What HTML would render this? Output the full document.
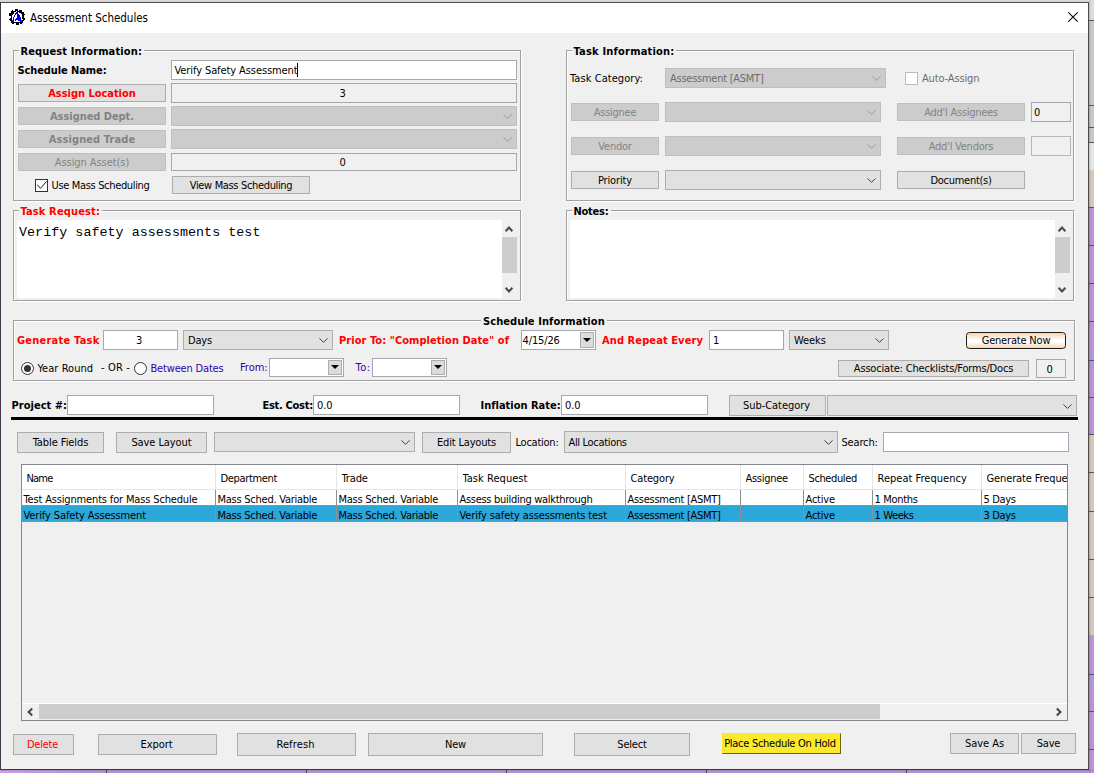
<!DOCTYPE html>
<html lang="en"><head><meta charset="utf-8"><title>Assessment Schedules</title>
<style>
*{box-sizing:border-box;margin:0;padding:0}
html,body{width:1094px;height:773px;overflow:hidden;background:#b993d6}
body{position:relative;font-family:"DejaVu Sans Condensed","DejaVu Sans","Liberation Sans",sans-serif;font-stretch:condensed;font-size:11px;color:#000;letter-spacing:-0.12px}
.a{position:absolute;white-space:nowrap}
.t{position:absolute;white-space:nowrap;line-height:14px;height:14px}
.b{font-weight:bold;letter-spacing:0.05px}
.r{color:#f00}
.btn{position:absolute;background:#e1e1e1;border:1px solid #adadad;text-align:center;white-space:nowrap;overflow:hidden}
.btn.d{background:#ccc;border-color:#bfbfbf;color:#838383}
.in{position:absolute;background:#fff;border:1px solid #a5a8b0;white-space:nowrap;overflow:hidden;padding-top:1px}
.ro{background:#f0f0f0;text-align:center}
.cb{position:absolute;background:#e1e1e1;border:1px solid #adadad;white-space:nowrap;overflow:hidden;padding-top:1px}
.cb.d{background:#ccc;border-color:#bfbfbf;color:#6d6d6d}
.grp{position:absolute;border:1px solid #a0a0a0;box-shadow:inset 1px 1px 0 #fff,1px 1px 0 #fff}
.gl{position:absolute;background:#f0f0f0;font-weight:bold;white-space:nowrap;line-height:14px;height:14px;padding:0 2px}
svg{position:absolute;overflow:visible}
</style></head>
<body>
<div class="a" style="left:0;top:0;width:1094px;height:773px;background:linear-gradient(90deg,#c8a1e1 0,#b494d0 8%,#b494d0 100%)"></div>
<div class="a" style="left:0;top:0;width:1094px;height:3px;background:linear-gradient(#dadada,#cfcfcf)"></div>
<div class="a" style="left:1088px;top:0px;width:6px;height:20px;background:#dcdcdc"></div>
<div class="a" style="left:1088px;top:20px;width:6px;height:122px;background:#c8c8c8"></div>
<div class="a" style="left:1088px;top:142px;width:6px;height:28px;background:#e6e6e6"></div>
<div class="a" style="left:1088px;top:170px;width:6px;height:37px;background:#dac7b7"></div>
<div class="a" style="left:1088px;top:207px;width:6px;height:227px;background:#ba94d8"></div>
<div class="a" style="left:1088px;top:434px;width:6px;height:201px;background:#d8c6b6"></div>
<div class="a" style="left:1088px;top:635px;width:6px;height:138px;background:#ba94d8"></div>
<div class="a" style="left:1088px;top:20px;width:6px;height:1px;background:#5b5560"></div>
<div class="a" style="left:1088px;top:105px;width:6px;height:1px;background:#5b5560"></div>
<div class="a" style="left:1088px;top:127px;width:6px;height:1px;background:#5b5560"></div>
<div class="a" style="left:1088px;top:142px;width:6px;height:1px;background:#5b5560"></div>
<div class="a" style="left:1088px;top:207px;width:6px;height:1px;background:#5b5560"></div>
<div class="a" style="left:1088px;top:245px;width:6px;height:1px;background:#5b5560"></div>
<div class="a" style="left:1088px;top:283px;width:6px;height:1px;background:#5b5560"></div>
<div class="a" style="left:1088px;top:321px;width:6px;height:1px;background:#5b5560"></div>
<div class="a" style="left:1088px;top:360px;width:6px;height:1px;background:#5b5560"></div>
<div class="a" style="left:1088px;top:397px;width:6px;height:1px;background:#5b5560"></div>
<div class="a" style="left:1088px;top:434px;width:6px;height:1px;background:#5b5560"></div>
<div class="a" style="left:1088px;top:472px;width:6px;height:1px;background:#5b5560"></div>
<div class="a" style="left:1088px;top:511px;width:6px;height:1px;background:#5b5560"></div>
<div class="a" style="left:1088px;top:559px;width:6px;height:1px;background:#5b5560"></div>
<div class="a" style="left:1088px;top:597px;width:6px;height:1px;background:#5b5560"></div>
<div class="a" style="left:1088px;top:674px;width:6px;height:1px;background:#5b5560"></div>
<div class="a" style="left:1088px;top:711px;width:6px;height:1px;background:#5b5560"></div>
<div class="a" style="left:1088px;top:749px;width:6px;height:1px;background:#5b5560"></div>
<div class="a" style="left:1089px;top:0;width:2px;height:773px;background:linear-gradient(90deg,rgba(0,0,0,.18),rgba(0,0,0,0))"></div>
<div class="a" style="left:0;top:770px;width:1094px;height:1px;background:rgba(0,0,0,.1)"></div>
<div class="a" style="left:106px;top:770px;width:1px;height:3px;background:#4a4350"></div>
<div class="a" style="left:306px;top:770px;width:1px;height:3px;background:#4a4350"></div>
<div class="a" style="left:506px;top:770px;width:1px;height:3px;background:#4a4350"></div>
<div class="a" style="left:706px;top:770px;width:1px;height:3px;background:#4a4350"></div>
<div class="a" style="left:906px;top:770px;width:1px;height:3px;background:#4a4350"></div>
<div class="a" style="left:0;top:2px;width:1089px;height:768px;background:#f0f0f0;border:1px solid #4d4d4d;border-left-color:#3f3648;border-bottom-color:#3f3648"></div>
<div class="a" style="left:1px;top:3px;width:1087px;height:30px;background:#fff"></div>
<svg style="left:9px;top:9px" width="16" height="16" viewBox="0 0 16 16" shape-rendering="crispEdges"><path d="M6 0h3v1h-3zM3 1h1v1h-1zM6 1h3v1h-3zM10 1h3v1h-3zM2 2h5v1h-5zM8 2h5v1h-5zM2 3h3v1h-3zM10 3h5v1h-5zM0 4h5v1h-5zM12 4h3v1h-3zM0 5h4v1h-4zM13 5h3v1h-3zM0 6h3v1h-3zM13 6h2v1h-2zM2 7h1v1h-1zM13 7h2v1h-2zM2 8h1v1h-1zM13 8h2v1h-2zM1 9h2v1h-2zM13 9h3v1h-3zM0 10h3v1h-3zM14 10h2v1h-2zM1 11h2v1h-2zM13 11h2v1h-2zM2 12h1v1h-1zM13 12h1v1h-1zM3 13h10v1h-10zM3 14h2v1h-2zM7 14h3v1h-3zM11 14h2v1h-2zM7 15h3v1h-3z" fill="#000"/><path d="M7 3h2v1h-2zM6 4h3v1h-3zM6 5h1v1h-1zM8 5h2v1h-2zM5 6h1v1h-1zM8 6h3v1h-3zM5 7h1v1h-1zM8 7h3v1h-3zM4 8h1v1h-1zM8 8h4v1h-4zM4 9h1v1h-1zM7 9h5v1h-5zM4 10h1v1h-1zM6 10h6v1h-6zM3 11h2v1h-2zM6 11h1v1h-1zM9 11h4v1h-4zM3 12h2v1h-2zM11 12h2v1h-2zM2 13h1v1h-1zM13 13h1v1h-1z" fill="#0000ff"/></svg>
<div class="a" style="left:30px;top:11px;font-size:11.5px;line-height:15px;letter-spacing:-0.015px;">Assessment Schedules</div>
<svg style="left:1068px;top:12px" width="10" height="10" viewBox="0 0 10 10"><path d="M0.3 0.3 L9.7 9.7 M9.7 0.3 L0.3 9.7" stroke="#000" stroke-width="1.05" fill="none"/></svg>
<div class="grp" style="left:13px;top:50px;width:508px;height:151px"></div>
<div class="gl " style="left:18.5px;top:45px;letter-spacing:0.131px;">Request Information:</div>
<div class="t b" style="left:17.5px;top:64px;letter-spacing:-0.098px;">Schedule Name:</div>
<div class="in " style="left:171px;top:60px;width:346px;height:20px;line-height:18px;letter-spacing:-0.094px;padding-left:2.5px">Verify Safety Assessment</div>
<div class="a" style="left:297px;top:63px;width:1px;height:14px;background:#000"></div>
<div class="btn b r" style="left:18px;top:84px;width:148px;height:18px;line-height:16px;padding-top:1px;letter-spacing:-0.035px;">Assign Location</div>
<div class="in ro" style="left:171px;top:83px;width:346px;height:20px;line-height:18px;padding-right:3px">3</div>
<div class="btn b d" style="left:18px;top:107px;width:148px;height:18px;line-height:16px;padding-top:1px;letter-spacing:-0.051px;">Assigned Dept.</div>
<div class="cb d" style="left:171px;top:106px;width:346px;height:20px;line-height:18px;padding-left:4px;"></div>
<svg style="left:503.0px;top:114.0px" width="9" height="5" viewBox="0 0 9 5"><path d="M0.5 0.4 L4.5 4.4 L8.5 0.4" fill="none" stroke="#9a9a9a" stroke-width="1"/></svg>
<div class="btn b d" style="left:18px;top:130px;width:148px;height:18px;line-height:16px;padding-top:1px;letter-spacing:0.099px;">Assigned Trade</div>
<div class="cb d" style="left:171px;top:129px;width:346px;height:20px;line-height:18px;padding-left:4px;"></div>
<svg style="left:503.0px;top:137.0px" width="9" height="5" viewBox="0 0 9 5"><path d="M0.5 0.4 L4.5 4.4 L8.5 0.4" fill="none" stroke="#9a9a9a" stroke-width="1"/></svg>
<div class="btn d" style="left:18px;top:153px;width:148px;height:18px;line-height:16px;padding-top:1px;letter-spacing:-0.071px;">Assign Asset(s)</div>
<div class="in ro" style="left:171px;top:153px;width:346px;height:18px;line-height:16px;padding-right:3px">0</div>
<div class="a" style="left:35px;top:179px;width:13px;height:13px;background:#fff;border:1px solid #333"></div>
<svg style="left:35px;top:179px" width="13" height="13" viewBox="0 0 13 13"><path d="M2.3 5.6 L5.5 9.4 L11.6 2.3" fill="none" stroke="#222" stroke-width="1"/></svg>
<div class="t " style="left:51.5px;top:179px;letter-spacing:-0.337px;">Use Mass Scheduling</div>
<div class="btn " style="left:172px;top:176px;width:138px;height:18px;line-height:16px;padding-top:1px;letter-spacing:-0.344px;">View Mass Scheduling</div>
<div class="grp" style="left:566px;top:50px;width:508px;height:151px"></div>
<div class="gl " style="left:571.5px;top:45px;letter-spacing:0.202px;">Task Information:</div>
<div class="t " style="left:570px;top:72px;letter-spacing:0.067px;">Task Category:</div>
<div class="cb d" style="left:665px;top:68px;width:221px;height:20px;line-height:18px;padding-left:4px;letter-spacing:-0.257px;">Assessment [ASMT]</div>
<svg style="left:872.0px;top:76.0px" width="9" height="5" viewBox="0 0 9 5"><path d="M0.5 0.4 L4.5 4.4 L8.5 0.4" fill="none" stroke="#9a9a9a" stroke-width="1"/></svg>
<div class="a" style="left:905px;top:72px;width:13px;height:13px;background:#fff;border:1px solid #bcbcbc"></div>
<div class="t " style="left:922px;top:72px;letter-spacing:-0.146px;color:#6d6d6d">Auto-Assign</div>
<div class="btn d" style="left:571px;top:103px;width:88px;height:18px;line-height:16px;padding-top:1px;letter-spacing:-0.260px;">Assignee</div>
<div class="cb d" style="left:665px;top:102px;width:216px;height:20px;line-height:18px;padding-left:4px;"></div>
<svg style="left:867.0px;top:110.0px" width="9" height="5" viewBox="0 0 9 5"><path d="M0.5 0.4 L4.5 4.4 L8.5 0.4" fill="none" stroke="#9a9a9a" stroke-width="1"/></svg>
<div class="btn d" style="left:897px;top:103px;width:128px;height:18px;line-height:16px;padding-top:1px;letter-spacing:-0.272px;">Add'l Assignees</div>
<div class="in " style="left:1031px;top:102px;width:40px;height:20px;line-height:18px;padding-left:2px;background:#f0f0f0">0</div>
<div class="btn d" style="left:571px;top:137px;width:88px;height:18px;line-height:16px;padding-top:1px;letter-spacing:-0.231px;">Vendor</div>
<div class="cb d" style="left:665px;top:136px;width:216px;height:20px;line-height:18px;padding-left:4px;"></div>
<svg style="left:867.0px;top:144.0px" width="9" height="5" viewBox="0 0 9 5"><path d="M0.5 0.4 L4.5 4.4 L8.5 0.4" fill="none" stroke="#9a9a9a" stroke-width="1"/></svg>
<div class="btn d" style="left:897px;top:137px;width:128px;height:18px;line-height:16px;padding-top:1px;letter-spacing:-0.230px;">Add'l Vendors</div>
<div class="in " style="left:1031px;top:136px;width:40px;height:20px;line-height:18px;background:#f0f0f0;border-color:#b4b6bc"></div>
<div class="btn " style="left:571px;top:171px;width:88px;height:18px;line-height:16px;padding-top:1px;letter-spacing:-0.125px;">Priority</div>
<div class="cb " style="left:665px;top:170px;width:216px;height:20px;line-height:18px;padding-left:4px;"></div>
<svg style="left:867.0px;top:178.0px" width="9" height="5" viewBox="0 0 9 5"><path d="M0.5 0.4 L4.5 4.4 L8.5 0.4" fill="none" stroke="#404040" stroke-width="1"/></svg>
<div class="btn " style="left:897px;top:171px;width:128px;height:18px;line-height:16px;padding-top:1px;letter-spacing:-0.287px;">Document(s)</div>
<div class="grp" style="left:13px;top:210px;width:508px;height:91px"></div>
<div class="gl r" style="left:18.5px;top:205px;letter-spacing:0.139px;">Task Request:</div>
<div class="a" style="left:17px;top:220px;width:485px;height:78px;background:#fff"></div>
<div class="a" style="left:19px;top:225px;font-family:'Liberation Mono',monospace;font-size:13.33px;line-height:16px;letter-spacing:0.05px;font-stretch:normal">Verify safety assessments test</div>
<div class="a" style="left:502px;top:220px;width:15px;height:78px;background:#f0f0f0"></div>
<div class="a" style="left:502px;top:237px;width:15px;height:36px;background:#cdcdcd"></div>
<svg style="left:505.0px;top:226px" width="8" height="6" viewBox="0 0 8 6"><path d="M0.6 5.2 L4 1.6 L7.4 5.2" fill="none" stroke="#4a4a4a" stroke-width="2.1"/></svg>
<svg style="left:505.0px;top:287px" width="8" height="6" viewBox="0 0 8 6"><path d="M0.6 0.8 L4 4.4 L7.4 0.8" fill="none" stroke="#4a4a4a" stroke-width="2.1"/></svg>
<div class="grp" style="left:566px;top:210px;width:508px;height:91px"></div>
<div class="gl " style="left:571.5px;top:205px;letter-spacing:-0.232px;">Notes:</div>
<div class="a" style="left:570px;top:220px;width:485px;height:78px;background:#fff"></div>
<div class="a" style="left:1055px;top:220px;width:15px;height:78px;background:#f0f0f0"></div>
<div class="a" style="left:1055px;top:237px;width:15px;height:36px;background:#cdcdcd"></div>
<svg style="left:1058.0px;top:226px" width="8" height="6" viewBox="0 0 8 6"><path d="M0.6 5.2 L4 1.6 L7.4 5.2" fill="none" stroke="#4a4a4a" stroke-width="2.1"/></svg>
<svg style="left:1058.0px;top:287px" width="8" height="6" viewBox="0 0 8 6"><path d="M0.6 0.8 L4 4.4 L7.4 0.8" fill="none" stroke="#4a4a4a" stroke-width="2.1"/></svg>
<div class="grp" style="left:13px;top:320px;width:1062px;height:61px"></div>
<div class="gl " style="left:481px;top:315px;letter-spacing:0.085px;">Schedule Information</div>
<div class="t b r" style="left:17px;top:334px;letter-spacing:0.228px;">Generate Task</div>
<div class="in " style="left:103px;top:330px;width:75px;height:20px;line-height:18px;text-align:center;padding-right:3px">3</div>
<div class="cb " style="left:183px;top:330px;width:150px;height:20px;line-height:18px;padding-left:4px;letter-spacing:-0.176px;">Days</div>
<svg style="left:319.0px;top:338.0px" width="9" height="5" viewBox="0 0 9 5"><path d="M0.5 0.4 L4.5 4.4 L8.5 0.4" fill="none" stroke="#404040" stroke-width="1"/></svg>
<div class="t b r" style="left:339px;top:334px;letter-spacing:0.056px;">Prior To: &quot;Completion Date&quot; of</div>
<div class="in" style="left:521px;top:330px;width:75px;height:20px;line-height:18px;padding-left:0.5px;letter-spacing:-0.122px;">4/15/26</div>
<div class="a" style="left:580px;top:332px;width:14px;height:16px;background:#dcdcdc;border:1px solid #adadad"></div>
<svg style="left:583px;top:338px" width="8" height="4" viewBox="0 0 8 4"><path d="M0 0 L8 0 L4 4 Z" fill="#000"/></svg>
<div class="t b r" style="left:602px;top:334px;letter-spacing:0.095px;">And Repeat Every</div>
<div class="in " style="left:709px;top:330px;width:75px;height:20px;line-height:18px;padding-left:3px">1</div>
<div class="cb " style="left:789px;top:330px;width:100px;height:20px;line-height:18px;padding-left:4px;letter-spacing:-0.084px;">Weeks</div>
<svg style="left:875.0px;top:338.0px" width="9" height="5" viewBox="0 0 9 5"><path d="M0.5 0.4 L4.5 4.4 L8.5 0.4" fill="none" stroke="#404040" stroke-width="1"/></svg>
<div class="a" style="left:966px;top:332px;width:100px;height:17px;border:1px solid #1c1c1c;border-radius:3.5px;background:linear-gradient(#fbd3ad,#fff 50%,#fff 60%,#fbd3ad);text-align:center;line-height:16px;letter-spacing:-0.185px;">Generate Now</div>
<div class="a" style="left:21px;top:362px;width:13px;height:13px;border-radius:50%;background:#fff;border:1px solid #333"></div>
<div class="a" style="left:24px;top:365px;width:7px;height:7px;border-radius:50%;background:#333"></div>
<div class="t " style="left:37.5px;top:362px;letter-spacing:0.038px;">Year Round</div>
<div class="t " style="left:101px;top:361px;letter-spacing:0.151px;">- OR -</div>
<div class="a" style="left:134px;top:362px;width:13px;height:13px;border-radius:50%;background:#fff;border:1px solid #333"></div>
<div class="t " style="left:150.5px;top:362px;letter-spacing:-0.174px;color:#3000a8">Between Dates</div>
<div class="t " style="left:240px;top:361px;letter-spacing:-0.030px;color:#3000a8">From:</div>
<div class="in" style="left:269px;top:358px;width:75px;height:19px;line-height:17px;padding-left:0.5px;"></div>
<div class="a" style="left:328px;top:360px;width:14px;height:15px;background:#dcdcdc;border:1px solid #adadad"></div>
<svg style="left:331px;top:365px" width="8" height="4" viewBox="0 0 8 4"><path d="M0 0 L8 0 L4 4 Z" fill="#000"/></svg>
<div class="t " style="left:355.5px;top:361px;letter-spacing:0.479px;color:#3000a8">To:</div>
<div class="in" style="left:372px;top:358px;width:75px;height:19px;line-height:17px;padding-left:0.5px;"></div>
<div class="a" style="left:431px;top:360px;width:14px;height:15px;background:#dcdcdc;border:1px solid #adadad"></div>
<svg style="left:434px;top:365px" width="8" height="4" viewBox="0 0 8 4"><path d="M0 0 L8 0 L4 4 Z" fill="#000"/></svg>
<div class="btn " style="left:838px;top:360px;width:191px;height:17px;line-height:15px;padding-top:0px;letter-spacing:-0.174px;">Associate: Checklists/Forms/Docs</div>
<div class="in ro" style="left:1036px;top:359px;width:30px;height:19px;line-height:17px;padding-right:3px">0</div>
<div class="t b" style="left:11.5px;top:399px;letter-spacing:0.027px;">Project #:</div>
<div class="in " style="left:67px;top:395px;width:147px;height:20px;line-height:18px;"></div>
<div class="t b" style="left:262.5px;top:399px;letter-spacing:-0.293px;">Est. Cost:</div>
<div class="in " style="left:313px;top:395px;width:147px;height:20px;line-height:18px;padding-left:3px">0.0</div>
<div class="t b" style="left:480.5px;top:399px;letter-spacing:-0.004px;">Inflation Rate:</div>
<div class="in " style="left:561px;top:395px;width:147px;height:20px;line-height:18px;padding-left:3px">0.0</div>
<div class="btn " style="left:729px;top:395px;width:97px;height:21px;line-height:19px;padding-top:0px;letter-spacing:-0.052px;padding-right:2px">Sub-Category</div>
<div class="cb " style="left:827px;top:395px;width:250px;height:21px;line-height:19px;padding-left:4px;"></div>
<svg style="left:1063.0px;top:403.5px" width="9" height="5" viewBox="0 0 9 5"><path d="M0.5 0.4 L4.5 4.4 L8.5 0.4" fill="none" stroke="#404040" stroke-width="1"/></svg>
<div class="a" style="left:11px;top:417px;width:1067px;height:3px;background:#000"></div>
<div class="btn " style="left:17px;top:432px;width:87px;height:21px;line-height:19px;padding-top:0px;letter-spacing:-0.074px;">Table Fields</div>
<div class="btn " style="left:116px;top:432px;width:91px;height:21px;line-height:19px;padding-top:0px;letter-spacing:-0.080px;">Save Layout</div>
<div class="cb " style="left:214px;top:432px;width:201px;height:20px;line-height:18px;padding-left:4px;"></div>
<svg style="left:401.0px;top:440.0px" width="9" height="5" viewBox="0 0 9 5"><path d="M0.5 0.4 L4.5 4.4 L8.5 0.4" fill="none" stroke="#404040" stroke-width="1"/></svg>
<div class="btn " style="left:422px;top:432px;width:89px;height:21px;line-height:19px;padding-top:0px;letter-spacing:-0.176px;">Edit Layouts</div>
<div class="t " style="left:515.5px;top:436px;letter-spacing:-0.241px;">Location:</div>
<div class="cb " style="left:564px;top:431px;width:274px;height:22px;line-height:20px;padding-left:4px;letter-spacing:-0.324px;padding-left:3.5px">All Locations</div>
<svg style="left:824.0px;top:440.0px" width="9" height="5" viewBox="0 0 9 5"><path d="M0.5 0.4 L4.5 4.4 L8.5 0.4" fill="none" stroke="#404040" stroke-width="1"/></svg>
<div class="t " style="left:841.5px;top:436px;letter-spacing:-0.161px;">Search:</div>
<div class="in " style="left:883px;top:432px;width:186px;height:20px;line-height:18px;"></div>
<div class="a" style="left:21px;top:464px;width:1047px;height:257px;border:1px solid #828790;background:#f0f0f0"></div>
<div class="a" style="left:22px;top:465px;width:1045px;height:24px;background:#fff"></div>
<div class="a" style="left:22px;top:489px;width:1045px;height:1px;background:#e5e5e5"></div>
<div class="t" style="left:26.5px;top:472px;width:188.5px;overflow:hidden;letter-spacing:-0.801px;">Name</div>
<div class="a" style="left:215px;top:465px;width:1px;height:24px;background:#e5e5e5"></div>
<div class="t" style="left:220.5px;top:472px;width:115.5px;overflow:hidden;letter-spacing:-0.329px;">Department</div>
<div class="a" style="left:336px;top:465px;width:1px;height:24px;background:#e5e5e5"></div>
<div class="t" style="left:341.5px;top:472px;width:115.5px;overflow:hidden;">Trade</div>
<div class="a" style="left:457px;top:465px;width:1px;height:24px;background:#e5e5e5"></div>
<div class="t" style="left:462.5px;top:472px;width:162.5px;overflow:hidden;letter-spacing:0.043px;">Task Request</div>
<div class="a" style="left:625px;top:465px;width:1px;height:24px;background:#e5e5e5"></div>
<div class="t" style="left:630.5px;top:472px;width:109.5px;overflow:hidden;letter-spacing:-0.150px;">Category</div>
<div class="a" style="left:740px;top:465px;width:1px;height:24px;background:#e5e5e5"></div>
<div class="t" style="left:745.5px;top:472px;width:57.5px;overflow:hidden;letter-spacing:-0.285px;">Assignee</div>
<div class="a" style="left:803px;top:465px;width:1px;height:24px;background:#e5e5e5"></div>
<div class="t" style="left:808.5px;top:472px;width:63.5px;overflow:hidden;letter-spacing:-0.387px;">Scheduled</div>
<div class="a" style="left:872px;top:465px;width:1px;height:24px;background:#e5e5e5"></div>
<div class="t" style="left:877.5px;top:472px;width:103.5px;overflow:hidden;letter-spacing:0.021px;">Repeat Frequency</div>
<div class="a" style="left:981px;top:465px;width:1px;height:24px;background:#e5e5e5"></div>
<div class="t" style="left:986.5px;top:472px;width:80.5px;overflow:hidden;">Generate Freque</div>
<div class="a" style="left:22px;top:490px;width:1045px;height:15px;background:#fff"></div>
<div class="a" style="left:22px;top:505px;width:1045px;height:1px;background:#909090"></div>
<div class="t" style="left:23.5px;top:493px;letter-spacing:-0.156px;">Test Assignments for Mass Schedule</div>
<div class="a" style="left:215px;top:490px;width:1px;height:16px;background:#909090"></div>
<div class="t" style="left:217.5px;top:493px;letter-spacing:-0.250px;">Mass Sched. Variable</div>
<div class="a" style="left:336px;top:490px;width:1px;height:16px;background:#909090"></div>
<div class="t" style="left:338.5px;top:493px;letter-spacing:-0.250px;">Mass Sched. Variable</div>
<div class="a" style="left:457px;top:490px;width:1px;height:16px;background:#909090"></div>
<div class="t" style="left:459.5px;top:493px;letter-spacing:-0.293px;">Assess building walkthrough</div>
<div class="a" style="left:625px;top:490px;width:1px;height:16px;background:#909090"></div>
<div class="t" style="left:627.5px;top:493px;letter-spacing:-0.275px;">Assessment [ASMT]</div>
<div class="a" style="left:740px;top:490px;width:1px;height:16px;background:#909090"></div>
<div class="a" style="left:803px;top:490px;width:1px;height:16px;background:#909090"></div>
<div class="t" style="left:805.5px;top:493px;letter-spacing:-0.199px;">Active</div>
<div class="a" style="left:872px;top:490px;width:1px;height:16px;background:#909090"></div>
<div class="t" style="left:874.5px;top:493px;letter-spacing:-0.328px;">1 Months</div>
<div class="a" style="left:981px;top:490px;width:1px;height:16px;background:#909090"></div>
<div class="t" style="left:983.5px;top:493px;letter-spacing:-0.323px;">5 Days</div>
<div class="a" style="left:22px;top:506px;width:1045px;height:15px;background:#2ba7da"></div>
<div class="a" style="left:22px;top:521px;width:1045px;height:1px;background:#909090"></div>
<div class="t" style="left:23.5px;top:509px;letter-spacing:-0.119px;">Verify Safety Assessment</div>
<div class="a" style="left:215px;top:506px;width:1px;height:16px;background:#909090"></div>
<div class="t" style="left:217.5px;top:509px;letter-spacing:-0.250px;">Mass Sched. Variable</div>
<div class="a" style="left:336px;top:506px;width:1px;height:16px;background:#909090"></div>
<div class="t" style="left:338.5px;top:509px;letter-spacing:-0.250px;">Mass Sched. Variable</div>
<div class="a" style="left:457px;top:506px;width:1px;height:16px;background:#909090"></div>
<div class="t" style="left:459.5px;top:509px;letter-spacing:-0.111px;">Verify safety assessments test</div>
<div class="a" style="left:625px;top:506px;width:1px;height:16px;background:#909090"></div>
<div class="t" style="left:627.5px;top:509px;letter-spacing:-0.275px;">Assessment [ASMT]</div>
<div class="a" style="left:740px;top:506px;width:1px;height:16px;background:#909090"></div>
<div class="a" style="left:803px;top:506px;width:1px;height:16px;background:#909090"></div>
<div class="t" style="left:805.5px;top:509px;letter-spacing:-0.199px;">Active</div>
<div class="a" style="left:872px;top:506px;width:1px;height:16px;background:#909090"></div>
<div class="t" style="left:874.5px;top:509px;letter-spacing:-0.379px;">1 Weeks</div>
<div class="a" style="left:981px;top:506px;width:1px;height:16px;background:#909090"></div>
<div class="t" style="left:983.5px;top:509px;letter-spacing:-0.323px;">3 Days</div>
<div class="a" style="left:22px;top:703px;width:1045px;height:17px;background:#f0f0f0"></div>
<div class="a" style="left:22px;top:703px;width:1045px;height:1px;background:#fff"></div>
<div class="a" style="left:39px;top:704px;width:841px;height:15px;background:#cdcdcd"></div>
<svg style="left:27px;top:707.5px" width="6" height="8" viewBox="0 0 6 8"><path d="M5.2 0.6 L1.6 4 L5.2 7.4" fill="none" stroke="#4a4a4a" stroke-width="2.1"/></svg>
<svg style="left:1056px;top:707.5px" width="6" height="8" viewBox="0 0 6 8"><path d="M0.8 0.6 L4.4 4 L0.8 7.4" fill="none" stroke="#4a4a4a" stroke-width="2.1"/></svg>
<div class="btn r" style="left:13px;top:734px;width:61px;height:21px;line-height:19px;padding-top:0px;letter-spacing:-0.255px;padding-right:2px">Delete</div>
<div class="btn " style="left:98px;top:734px;width:119px;height:21px;line-height:19px;padding-top:0px;letter-spacing:-0.065px;padding-right:2px">Export</div>
<div class="btn " style="left:237px;top:733px;width:119px;height:23px;line-height:21px;padding-top:0px;letter-spacing:0.129px;padding-right:2px">Refresh</div>
<div class="btn " style="left:368px;top:733px;width:175px;height:23px;line-height:21px;padding-top:0px;letter-spacing:-0.198px;">New</div>
<div class="btn " style="left:574px;top:733px;width:116px;height:23px;line-height:21px;padding-top:0px;letter-spacing:-0.208px;">Select</div>
<div class="a" style="left:722px;top:733px;width:119px;height:21px;background:#fce92e;border:1px solid #fce92e;border-bottom-color:#6e6400;border-right-color:#6e6400;text-align:center;line-height:19px;padding-right:3px;letter-spacing:-0.283px;">Place Schedule On Hold</div>
<div class="btn " style="left:950px;top:733px;width:69px;height:21px;line-height:19px;padding-top:0px;letter-spacing:-0.051px;">Save As</div>
<div class="btn " style="left:1021px;top:733px;width:55px;height:21px;line-height:19px;padding-top:0px;letter-spacing:-0.224px;">Save</div>
</body></html>
